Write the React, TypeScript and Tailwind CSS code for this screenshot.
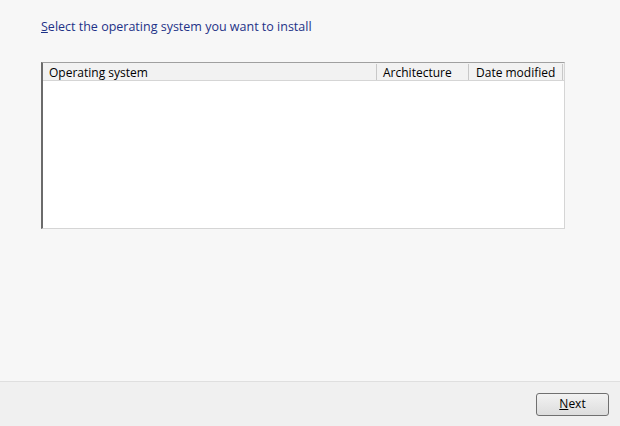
export default function App() {
  return (
    <div className="flex h-[426px] w-[620px] flex-col bg-[#f7f7f7] font-['Open_Sans',sans-serif] text-[12px] text-black">
      <div className="flex-1 px-[41px] pt-[17px]">
        <div className="text-[12.5px] leading-[20px] text-[#1e3287]">
          <span className="underline">S</span>elect the operating system you want to install
        </div>

        {/* OS list */}
        <div className="mt-[25px] flex h-[167px] w-[524px] flex-col border border-l-2 border-[#d5d5d5] border-l-[#6b6b6b] border-t-[#a0a0a0] bg-white">
          <div className="flex h-[18px] border-b border-[#d5d5d5] bg-[#f2f2f2] pt-[1px] leading-[17px]">
            <div className="w-[334px] border-r border-[#c8c8c8] pl-[6px]">Operating system</div>
            <div className="w-[92px] border-r border-[#c8c8c8] pl-[6px]">Architecture</div>
            <div className="w-[94px] border-r border-[#c8c8c8] pl-[7px]">Date modified</div>
          </div>
          <div className="flex-1" />
        </div>
      </div>

      {/* footer */}
      <div className="flex h-[45px] items-center justify-end border-t border-[#dfdfdf] bg-[#f0f0f0] pr-[11px]">
        <button className="h-[23px] w-[73px] rounded-[3px] border border-[#707070] bg-gradient-to-b from-[#f2f2f2] to-[#dddddd] text-[12px] leading-[20px] text-black">
          <span className="underline">N</span>ext
        </button>
      </div>
    </div>
  )
}
